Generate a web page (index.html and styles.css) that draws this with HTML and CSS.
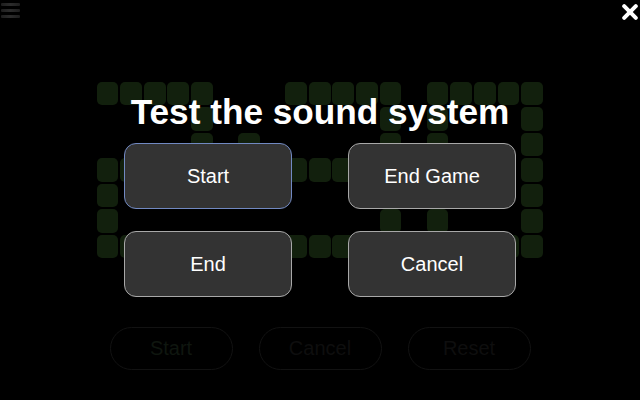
FILE: index.html
```html
<!DOCTYPE html>
<html>
<head>
<meta charset="utf-8">
<title>Sound test</title>
<link rel="stylesheet" href="styles.css">
</head>
<body>
<div class="game">
  <div class="menu-icon"><span></span><span></span><span></span></div>

  <div class="board">
    <span class="on"></span><span class="on"></span><span class="on"></span><span class="on"></span><span class="on"></span><span></span><span></span><span></span><span class="on"></span><span class="on"></span><span class="on"></span><span class="on"></span><span class="on"></span><span></span><span class="on"></span><span class="on"></span><span class="on"></span><span class="on"></span><span class="on"></span>
    <span></span><span></span><span></span><span></span><span class="on"></span><span></span><span></span><span></span><span></span><span></span><span></span><span></span><span class="on"></span><span></span><span class="on"></span><span></span><span></span><span></span><span class="on"></span>
    <span></span><span></span><span></span><span></span><span class="on"></span><span></span><span class="on"></span><span></span><span></span><span></span><span></span><span></span><span class="on"></span><span></span><span class="on"></span><span></span><span></span><span></span><span class="on"></span>
    <span class="on"></span><span class="on"></span><span class="on"></span><span class="on"></span><span class="on"></span><span class="on"></span><span class="on"></span><span class="on"></span><span class="on"></span><span class="on"></span><span class="on"></span><span></span><span></span><span></span><span></span><span></span><span></span><span></span><span class="on"></span>
    <span class="on"></span><span></span><span></span><span></span><span></span><span></span><span></span><span></span><span></span><span></span><span></span><span></span><span></span><span></span><span></span><span></span><span></span><span></span><span class="on"></span>
    <span class="on"></span><span></span><span></span><span></span><span></span><span></span><span></span><span></span><span></span><span></span><span></span><span></span><span class="on"></span><span></span><span class="on"></span><span></span><span></span><span></span><span class="on"></span>
    <span class="on"></span><span class="on"></span><span class="on"></span><span class="on"></span><span class="on"></span><span class="on"></span><span class="on"></span><span class="on"></span><span class="on"></span><span class="on"></span><span class="on"></span><span class="on"></span><span class="on"></span><span class="on"></span><span class="on"></span><span class="on"></span><span class="on"></span><span class="on"></span><span class="on"></span>
  </div>

  <div class="controls">
    <button class="pill pill-start">Start</button>
    <button class="pill">Cancel</button>
    <button class="pill">Reset</button>
  </div>

  <div class="overlay">
    <button class="close" aria-label="Close">
      <svg width="16" height="16" viewBox="0 0 16 16"><path d="M2.2 2.2 L13.8 13.8 M13.8 2.2 L2.2 13.8" stroke="#fff" stroke-width="4" stroke-linecap="round" fill="none"/></svg>
    </button>
    <h1 class="title">Test the sound system</h1>
    <div class="choices">
      <button class="choice focused">Start</button>
      <button class="choice">End Game</button>
      <button class="choice">End</button>
      <button class="choice">Cancel</button>
    </div>
  </div>
</div>
</body>
</html>
```

FILE: styles.css
```css
html, body {
  margin: 0;
  padding: 0;
  background: #000;
}
body {
  font-family: "Liberation Sans", Arial, sans-serif;
  color: #fff;
}
.game {
  position: relative;
  width: 640px;
  height: 400px;
  overflow: hidden;
  background: #000;
}
.menu-icon {
  position: absolute;
  left: 1px;
  top: 3px;
  display: flex;
  flex-direction: column;
  gap: 3px;
}
.menu-icon span {
  display: block;
  width: 19px;
  height: 3px;
  border-radius: 1px;
  background: linear-gradient(90deg, #1e1e1e, #2c2c2c 50%, #1e1e1e);
}
.board {
  display: grid;
  grid-template-columns: repeat(19, 21.7px);
  grid-template-rows: repeat(7, 23.3px);
  column-gap: 1.9px;
  row-gap: 2.25px;
  padding: 81.7px 0 0 96.7px;
}
.board span {
  border-radius: 5px;
}
.board span.on {
  background: #12200d;
}
.controls {
  display: flex;
  justify-content: center;
  gap: 26px;
  margin-top: 69px;
}
.pill {
  width: 123px;
  height: 43px;
  border: 1px solid #121212;
  border-radius: 22px;
  background: transparent;
  color: #0e0e0e;
  font-family: "Liberation Sans", Arial, sans-serif;
  font-size: 20px;
  padding: 0;
}
.pill-start {
  color: #0f160f;
}
.overlay {
  position: absolute;
  inset: 0;
  display: flex;
  flex-direction: column;
  align-items: center;
  padding-top: 92px;
}
.close {
  position: absolute;
  top: 3.5px;
  right: 2.5px;
  width: 16px;
  height: 16px;
  padding: 0;
  border: 0;
  background: transparent;
  display: block;
}
.close svg {
  display: block;
}
.title {
  margin: 0 0 11px;
  font-size: 35.2px;
  line-height: 40px;
  font-weight: bold;
  color: #fff;
  white-space: nowrap;
}
.choices {
  display: grid;
  grid-template-columns: 168px 168px;
  grid-auto-rows: 66px;
  column-gap: 56px;
  row-gap: 22px;
}
.choice {
  box-sizing: border-box;
  width: 168px;
  height: 66px;
  background: #333;
  border: 1px solid #a8a8a8;
  border-radius: 12px;
  color: #fff;
  font-family: "Liberation Sans", Arial, sans-serif;
  font-size: 20px;
  padding: 0;
}
.choice.focused {
  border-color: #7189c2;
}
```
